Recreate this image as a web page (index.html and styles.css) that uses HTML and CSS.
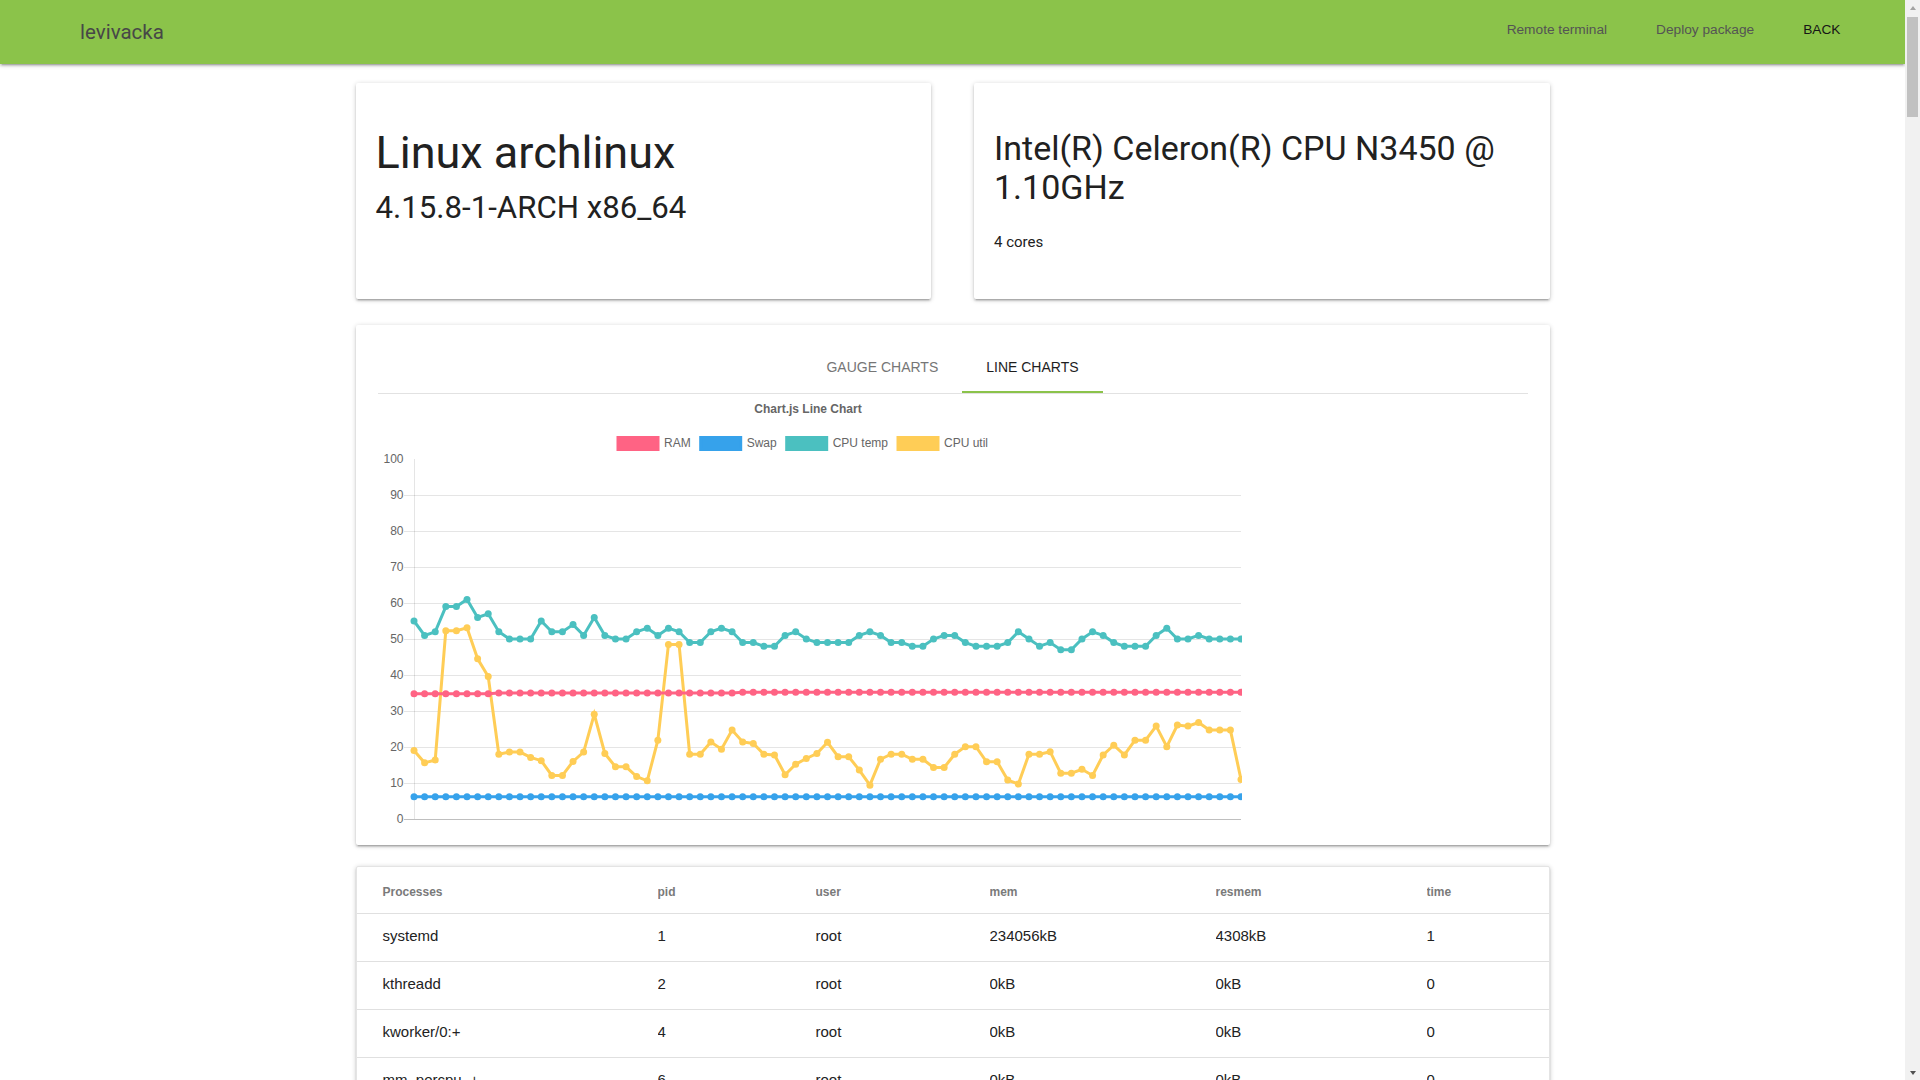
FILE: index.html
```html
<!DOCTYPE html>
<html lang="en">
<head>
<meta charset="utf-8">
<title>levivacka</title>
<link rel="stylesheet" href="styles.css">
</head>
<body>
<div class="page">
  <nav class="navbar">
    <a class="brand" href="#">levivacka</a>
    <ul class="nav-links">
      <li><a href="#" class="nav-link">Remote terminal</a></li>
      <li><a href="#" class="nav-link">Deploy package</a></li>
      <li><a href="#" class="nav-link nav-back">BACK</a></li>
    </ul>
  </nav>

  <main class="container">
    <section class="info-row">
      <div class="card info-card">
        <h3 class="os-name">Linux archlinux</h3>
        <h4 class="os-version">4.15.8-1-ARCH x86_64</h4>
      </div>
      <div class="card info-card">
        <h4 class="cpu-name">Intel(R) Celeron(R) CPU N3450 @ 1.10GHz</h4>
        <p class="cpu-cores">4 cores</p>
      </div>
    </section>

    <section class="card chart-card">
      <ul class="tabs">
        <li class="tab">GAUGE CHARTS</li>
        <li class="tab active">LINE CHARTS</li>
      </ul>
      <svg class="line-chart" width="864" height="432" viewBox="0 0 864 432">
        <defs>
          <marker id="dot-ram" viewBox="0 0 8 8" refX="4" refY="4" markerWidth="8" markerHeight="8" markerUnits="userSpaceOnUse"><circle cx="4" cy="4" r="3.5" class="c-ram"/></marker>
          <marker id="dot-swap" viewBox="0 0 8 8" refX="4" refY="4" markerWidth="8" markerHeight="8" markerUnits="userSpaceOnUse"><circle cx="4" cy="4" r="3.5" class="c-swap"/></marker>
          <marker id="dot-temp" viewBox="0 0 8 8" refX="4" refY="4" markerWidth="8" markerHeight="8" markerUnits="userSpaceOnUse"><circle cx="4" cy="4" r="3.5" class="c-temp"/></marker>
          <marker id="dot-util" viewBox="0 0 8 8" refX="4" refY="4" markerWidth="8" markerHeight="8" markerUnits="userSpaceOnUse"><circle cx="4" cy="4" r="3.5" class="c-util"/></marker>
        </defs>

        <text class="chart-title" x="430" y="16">Chart.js Line Chart</text>

        <g class="legend">
          <rect class="legend-box c-ram" x="240" y="43.5" width="40" height="12"/>
          <text class="legend-text" x="286" y="50">RAM</text>
          <rect class="legend-box c-swap" x="322.7" y="43.5" width="40" height="12"/>
          <text class="legend-text" x="368.7" y="50">Swap</text>
          <rect class="legend-box c-temp" x="408.7" y="43.5" width="40" height="12"/>
          <text class="legend-text" x="454.7" y="50">CPU temp</text>
          <rect class="legend-box c-util" x="520" y="43.5" width="40" height="12"/>
          <text class="legend-text" x="566" y="50">CPU util</text>
        </g>

        <g class="grid">
          <line x1="26" y1="389.5" x2="863" y2="389.5"/>
          <line x1="26" y1="353.5" x2="863" y2="353.5"/>
          <line x1="26" y1="317.5" x2="863" y2="317.5"/>
          <line x1="26" y1="281.5" x2="863" y2="281.5"/>
          <line x1="26" y1="245.5" x2="863" y2="245.5"/>
          <line x1="26" y1="209.5" x2="863" y2="209.5"/>
          <line x1="26" y1="173.5" x2="863" y2="173.5"/>
          <line x1="26" y1="137.5" x2="863" y2="137.5"/>
          <line x1="26" y1="101.5" x2="863" y2="101.5"/>
          <line x1="36.5" y1="65" x2="36.5" y2="425"/>
        </g>
        <line class="zero-line" x1="26" y1="425.5" x2="863" y2="425.5"/>

        <g class="y-labels">
          <text x="25.5" y="66">100</text>
          <text x="25.5" y="102">90</text>
          <text x="25.5" y="138">80</text>
          <text x="25.5" y="174">70</text>
          <text x="25.5" y="210">60</text>
          <text x="25.5" y="246">50</text>
          <text x="25.5" y="282">40</text>
          <text x="25.5" y="318">30</text>
          <text x="25.5" y="354">20</text>
          <text x="25.5" y="390">10</text>
          <text x="25.5" y="426">0</text>
        </g>

        <polyline id="line-util" class="series s-util" points=""/>
        <polyline id="line-temp" class="series s-temp" points=""/>
        <polyline id="line-swap" class="series s-swap" points=""/>
        <polyline id="line-ram" class="series s-ram" points=""/>
      </svg>
    </section>

    <section class="card table-card">
      <table class="proc-table">
        <colgroup>
          <col class="col-name">
          <col class="col-pid">
          <col class="col-user">
          <col class="col-mem">
          <col class="col-resmem">
          <col class="col-time">
        </colgroup>
        <thead>
          <tr><th>Processes</th><th>pid</th><th>user</th><th>mem</th><th>resmem</th><th>time</th></tr>
        </thead>
        <tbody>
          <tr><td>systemd</td><td>1</td><td>root</td><td>234056kB</td><td>4308kB</td><td>1</td></tr>
          <tr><td>kthreadd</td><td>2</td><td>root</td><td>0kB</td><td>0kB</td><td>0</td></tr>
          <tr><td>kworker/0:+</td><td>4</td><td>root</td><td>0kB</td><td>0kB</td><td>0</td></tr>
          <tr><td>mm_percpu_+</td><td>6</td><td>root</td><td>0kB</td><td>0kB</td><td>0</td></tr>
        </tbody>
      </table>
    </section>
  </main>
</div>

<div class="scrollbar" aria-hidden="true">
  <span class="sb-button"><span class="sb-arrow-up"></span></span>
  <span class="sb-thumb"></span>
  <span class="sb-button sb-button-end"><span class="sb-arrow-down"></span></span>
</div>

<script src="app.js"></script>
</body>
</html>
```

FILE: styles.css
```css
* {
  box-sizing: border-box;
}

html,
body {
  margin: 0;
  padding: 0;
}

body {
  background: #ffffff;
  font-family: "Liberation Sans", Arial, sans-serif;
  color: rgba(0, 0, 0, 0.87);
  overflow: hidden;
}

.page {
  margin-right: 15px;
}

/* ---------- fake browser scrollbar ---------- */
.scrollbar {
  position: fixed;
  top: 0;
  right: 0;
  width: 15px;
  height: 100vh;
  background: #f1f1f1;
  display: flex;
  flex-direction: column;
  align-items: center;
  z-index: 10;
}

.sb-button {
  width: 15px;
  height: 15px;
  display: flex;
  align-items: center;
  justify-content: center;
}

.sb-button-end {
  margin-top: auto;
}

.sb-arrow-up {
  width: 0;
  height: 0;
  border-left: 3.5px solid transparent;
  border-right: 3.5px solid transparent;
  border-bottom: 4px solid #a3a3a3;
}

.sb-arrow-down {
  width: 0;
  height: 0;
  border-left: 3.5px solid transparent;
  border-right: 3.5px solid transparent;
  border-top: 4px solid #505050;
}

.sb-thumb {
  width: 11px;
  height: 100px;
  margin-top: 2px;
  background: #c1c1c1;
}

/* ---------- navbar ---------- */
.navbar {
  position: relative;
  z-index: 2;
  height: 64px;
  background: #8bc34a;
  display: flex;
  justify-content: space-between;
  align-items: flex-start;
  padding: 0 40px 0 80px;
  box-shadow: 0 2px 2px 0 rgba(0, 0, 0, 0.14), 0 3px 1px -2px rgba(0, 0, 0, 0.12), 0 1px 5px 0 rgba(0, 0, 0, 0.2);
}

.brand {
  font-family: Roboto, "Liberation Sans", sans-serif;
  font-size: 20.5px;
  line-height: 64px;
  color: #474747;
  text-decoration: none;
}

.nav-links {
  display: flex;
  list-style: none;
  margin: 0;
  padding: 0;
}

.nav-link {
  display: block;
  padding: 0 24.5px;
  line-height: 60px;
  font-size: 13.7px;
  color: #545454;
  text-decoration: none;
}

.nav-back {
  color: #161616;
}

/* ---------- layout ---------- */
.container {
  width: 1194px;
  margin: 19px auto 0;
}

.info-row {
  display: grid;
  grid-template-columns: 1fr 1fr;
  column-gap: 43px;
}

.card {
  background: #ffffff;
  border-radius: 2px;
  box-shadow: 0 2px 2px 0 rgba(0, 0, 0, 0.14), 0 3px 1px -2px rgba(0, 0, 0, 0.12), 0 1px 5px 0 rgba(0, 0, 0, 0.2);
}

/* ---------- info cards ---------- */
.info-card {
  height: 216px;
  padding: 24px 20px;
  font-family: Roboto, "Liberation Sans", sans-serif;
  color: #212121;
}

.os-name {
  margin: 21px 0 0;
  font-size: 45px;
  line-height: 49.5px;
  font-weight: 400;
}

.os-version {
  margin: 13.5px 0 0;
  font-size: 31.2px;
  line-height: 33px;
  font-weight: 400;
}

.cpu-name {
  margin: 21.6px 0 0;
  font-size: 34px;
  line-height: 39.5px;
  font-weight: 400;
}

.cpu-cores {
  margin: 23px 0 0;
  font-size: 15px;
  line-height: 22.5px;
}

/* ---------- chart card ---------- */
.chart-card {
  margin-top: 26px;
  padding: 20px 22px 19px;
}

.tabs {
  display: flex;
  justify-content: center;
  list-style: none;
  margin: 0;
  padding: 0;
  height: 49px;
  border-bottom: 1px solid #e2e2e2;
}

.tab {
  position: relative;
  height: 48px;
  padding: 0 24px;
  line-height: 44px;
  font-size: 14px;
  color: #767676;
}

.tab.active {
  color: #1e1e1e;
}

.tab.active::after {
  content: "";
  position: absolute;
  left: 0;
  right: 0;
  bottom: 0;
  height: 2px;
  background: #8bc34a;
}

.line-chart {
  display: block;
  font-family: "Liberation Sans", Arial, sans-serif;
}

.chart-title {
  font-size: 12px;
  font-weight: bold;
  fill: #666666;
  text-anchor: middle;
  dominant-baseline: middle;
}

.legend-text {
  font-size: 12px;
  fill: #666666;
  dominant-baseline: middle;
}

.legend-box {
  stroke-width: 3;
}

.c-ram { fill: rgb(255, 99, 132); stroke: rgb(255, 99, 132); }
.c-swap { fill: rgb(54, 162, 235); stroke: rgb(54, 162, 235); }
.c-temp { fill: rgb(75, 192, 192); stroke: rgb(75, 192, 192); }
.c-util { fill: rgb(255, 205, 86); stroke: rgb(255, 205, 86); }

marker circle {
  stroke-width: 0;
}

.grid line {
  stroke: rgba(0, 0, 0, 0.1);
  stroke-width: 1;
}

.zero-line {
  stroke: rgba(0, 0, 0, 0.25);
  stroke-width: 1;
}

.y-labels text {
  font-size: 12px;
  fill: #666666;
  text-anchor: end;
  dominant-baseline: middle;
}

.series {
  fill: none;
  stroke-width: 3;
  stroke-linejoin: miter;
}

.s-ram { stroke: rgb(255, 99, 132); marker-start: url(#dot-ram); marker-mid: url(#dot-ram); marker-end: url(#dot-ram); }
.s-swap { stroke: rgb(54, 162, 235); marker-start: url(#dot-swap); marker-mid: url(#dot-swap); marker-end: url(#dot-swap); }
.s-temp { stroke: rgb(75, 192, 192); marker-start: url(#dot-temp); marker-mid: url(#dot-temp); marker-end: url(#dot-temp); }
.s-util { stroke: rgb(255, 205, 86); marker-start: url(#dot-util); marker-mid: url(#dot-util); marker-end: url(#dot-util); }

/* ---------- process table ---------- */
.table-card {
  margin: 21px 0 20px;
  border: 1px solid #e4e4e4;
}

.proc-table {
  width: 100%;
  border-collapse: separate;
  border-spacing: 0;
  table-layout: fixed;
}

.col-name { width: 301px; }
.col-pid { width: 158px; }
.col-user { width: 174px; }
.col-mem { width: 226px; }
.col-resmem { width: 211px; }
.col-time { width: auto; }

.proc-table th,
.proc-table td {
  text-align: left;
  padding: 0;
  border-bottom: 1px solid #e0e0e0;
  white-space: nowrap;
  overflow: hidden;
}

.proc-table th {
  height: 47px;
  padding-top: 4px;
  font-size: 12px;
  font-weight: bold;
  color: #7a7a7a;
}

.proc-table td {
  height: 48px;
  padding-bottom: 5px;
  font-size: 15px;
  color: #222222;
}

.proc-table th:first-child,
.proc-table td:first-child {
  padding-left: 26px;
}
```

FILE: app.js
```js
(function () {
  var N = 79, LEFT = 36, RIGHT = 863, ZERO = 425, PX = 3.6;
  var step = (RIGHT - LEFT) / (N - 1);

  var temp = [55,51,52,59,59,61,56,57,52,50,50,50,55,52,52,54,51,56,51,50,50,52,53,51,53,52,49,49,52,53,52,49,49,48,48,51,52,50,49,49,49,49,51,
              52,51,49,49,48,48,50,51,51,49,48,48,48,49,52,50,48,49,47,47,50,52,51,49,48,48,48,51,53,50,50,51,50,50,50,50];
  var util = [19,15.6,16.4,52.3,52.3,53.1,44.5,39.6,18,18.6,18.6,17.1,16.2,12.1,12.1,16,18.6,29.1,18.2,14.5,14.5,11.8,10.6,21.9,48.5,48.5,18,18,21.4,19.4,24.7,21.4,21,18,17.8,12.3,15.2,16.8,18.2,21.3,17.3,17.3,13.6,
              9.4,16.6,18,18,16.6,16.6,14.3,14.3,18,20.1,20.1,15.9,15.9,10.8,9.7,18,18,18.7,12.7,12.7,13.8,12.1,17.8,20.5,17.8,21.9,21.9,25.8,20.1,26.1,25.8,26.8,24.7,24.7,24.7,11];
  var ram = [], swap = [];
  for (var i = 0; i < N; i++) {
    ram.push(i < 8 ? 34.8 : (i < 31 ? 35.0 : 35.2));
    swap.push(6.2);
  }

  function pts(arr) {
    return arr.map(function (v, k) {
      return (LEFT + k * step).toFixed(2) + ',' + (ZERO - v * PX).toFixed(2);
    }).join(' ');
  }

  var series = { ram: ram, swap: swap, temp: temp, util: util };
  Object.keys(series).forEach(function (key) {
    var el = document.getElementById('line-' + key);
    if (el) { el.setAttribute('points', pts(series[key])); }
  });
})();
```
